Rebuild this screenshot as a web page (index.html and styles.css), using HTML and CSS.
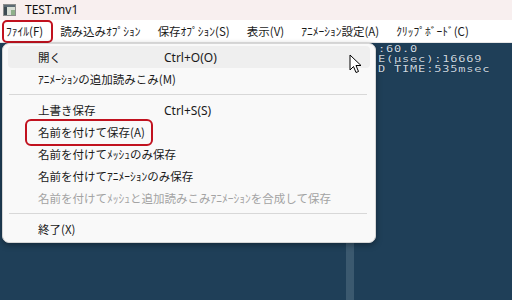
FILE: index.html
```html
<!DOCTYPE html>
<html lang="ja">
<head>
<meta charset="utf-8">
<title>TEST.mv1</title>
<link rel="stylesheet" href="styles.css">
</head>
<body>
<div class="window">
  <div class="titlebar">
    <svg class="app-icon" width="13" height="12" viewBox="0 0 13 12">
      <rect x="0.5" y="0.5" width="12" height="11" fill="#f4f4f4" stroke="#8c8c8c"/>
      <rect x="1" y="1" width="11" height="2" fill="#5d6a74"/>
      <rect x="1" y="3" width="3" height="8" fill="#3e4a52"/>
      <rect x="4" y="3" width="8" height="8" fill="#d9ded6"/>
      <rect x="8" y="6" width="4" height="5" fill="#8fb08a"/>
    </svg>
    <span class="title">TEST.mv1</span>
  </div>
  <div class="menubar">
    <span class="mitem active">ﾌｧｲﾙ(F)</span>
    <span class="mitem">読み込みｵﾌﾟｼｮﾝ</span>
    <span class="mitem">保存ｵﾌﾟｼｮﾝ(S)</span>
    <span class="mitem">表示(V)</span>
    <span class="mitem">ｱﾆﾒｰｼｮﾝ設定(A)</span>
    <span class="mitem">ｸﾘｯﾌﾟﾎﾞｰﾄﾞ(C)</span>
  </div>
  <div class="workspace">
    <div class="pane-left"></div>
    <div class="splitter"></div>
    <div class="pane-right">
      <div class="info-block">
        <div class="info">:60.0</div>
        <div class="info">E(μsec):16669</div>
        <div class="info">D TIME:535msec</div>
      </div>
    </div>

    <div class="popup">
      <div class="item hover"><span class="label">開く</span><span class="key">Ctrl+O(O)</span></div>
      <div class="item"><span class="label">ｱﾆﾒｰｼｮﾝの追加読みこみ(M)</span></div>
      <div class="sep"></div>
      <div class="item"><span class="label">上書き保存</span><span class="key">Ctrl+S(S)</span></div>
      <div class="item marked"><span class="label">名前を付けて保存(A)</span></div>
      <div class="item"><span class="label">名前を付けてﾒｯｼｭのみ保存</span></div>
      <div class="item"><span class="label">名前を付けてｱﾆﾒｰｼｮﾝのみ保存</span></div>
      <div class="item disabled"><span class="label">名前を付けてﾒｯｼｭと追加読みこみｱﾆﾒｰｼｮﾝを合成して保存</span></div>
      <div class="sep"></div>
      <div class="item"><span class="label">終了(X)</span></div>
    </div>

    <svg class="cursor" width="14" height="21" viewBox="0 0 14 21">
      <path d="M1 1 L1 16 L4.5 12.5 L7 18.5 L9.5 17.5 L7 11.5 L12 11.5 Z" fill="#ffffff" stroke="#000000" stroke-width="1" stroke-linejoin="round"/>
    </svg>
  </div>
</div>
</body>
</html>
```
FILE: styles.css
```css
* { box-sizing: border-box; }
html, body { margin: 0; padding: 0; }
body {
  width: 512px;
  height: 300px;
  overflow: hidden;
  font-family: "Noto Sans CJK JP", "Noto Sans", sans-serif;
  font-size: 12px;
  color: #1a1a1a;
}
.window {
  display: flex;
  flex-direction: column;
  height: 300px;
}
.titlebar {
  height: 20px;
  display: flex;
  align-items: center;
  background: #f8efef;
  padding-left: 3px;
}
.app-icon { display: block; }
.title {
  margin-left: 9px;
  font-family: "Noto Sans", sans-serif;
  font-size: 12px;
  color: #111;
  line-height: 20px;
}
.menubar {
  height: 23px;
  display: flex;
  align-items: center;
  background: #ffffff;
  border-bottom: 1px solid #e6e6e6;
  padding-left: 2px;
}
.mitem {
  position: relative;
  padding: 0 5px 0 4px;
  margin-right: 8px;
  line-height: 21px;
  font-size: 11.5px;
  white-space: nowrap;
}
.mitem.active::after {
  content: "";
  position: absolute;
  left: 0;
  top: -1px;
  right: -5px;
  bottom: -1px;
  border: 2px solid #c1121f;
  border-radius: 5px;
}
.workspace {
  position: relative;
  flex: 1;
  display: flex;
  background: #1f3f58;
}
.pane-left { width: 346px; }
.splitter { width: 8px; background: #3b596f; }
.pane-right {
  flex: 1;
  padding: 1px 0 0 24px;
}
.info-block {
  transform: scaleY(0.77);
  transform-origin: 0 0;
}
.info {
  font-family: "DejaVu Sans Mono", monospace;
  font-size: 12px;
  line-height: 13px;
  color: #cdd9e2;
  letter-spacing: 0.8px;
  white-space: nowrap;
  text-shadow: 0 0 1px #0a1a26;
}
.popup {
  position: absolute;
  left: 2px;
  top: 0;
  width: 374px;
  padding: 2px 0 2px;
  background: #f9f9f9;
  border: 1px solid #d6d6d6;
  border-radius: 7px;
  box-shadow: 0 2px 6px rgba(0, 0, 0, 0.35);
}
.item {
  position: relative;
  display: flex;
  align-items: center;
  height: 22px;
  margin: 0 5px;
  padding-left: 30px;
  border-radius: 4px;
  white-space: nowrap;
  font-size: 11.5px;
}
.item.hover { background: #efefef; }
.label { width: 126px; flex: none; }
.key { font-family: "Noto Sans", sans-serif; font-size: 12px; }
.item.disabled { color: #a3a3a3; }
.item.marked::after {
  content: "";
  position: absolute;
  left: 17px;
  top: -2px;
  width: 124px;
  height: 23px;
  border: 2px solid #c1121f;
  border-radius: 6px;
}
.sep {
  height: 9px;
  margin: 0 8px 0 6px;
  position: relative;
}
.sep::before {
  content: "";
  position: absolute;
  left: 0; right: 0; top: 4px;
  height: 1px;
  background: #d8d8d8;
}
.cursor {
  position: absolute;
  left: 349px;
  top: 11px;
}
```
